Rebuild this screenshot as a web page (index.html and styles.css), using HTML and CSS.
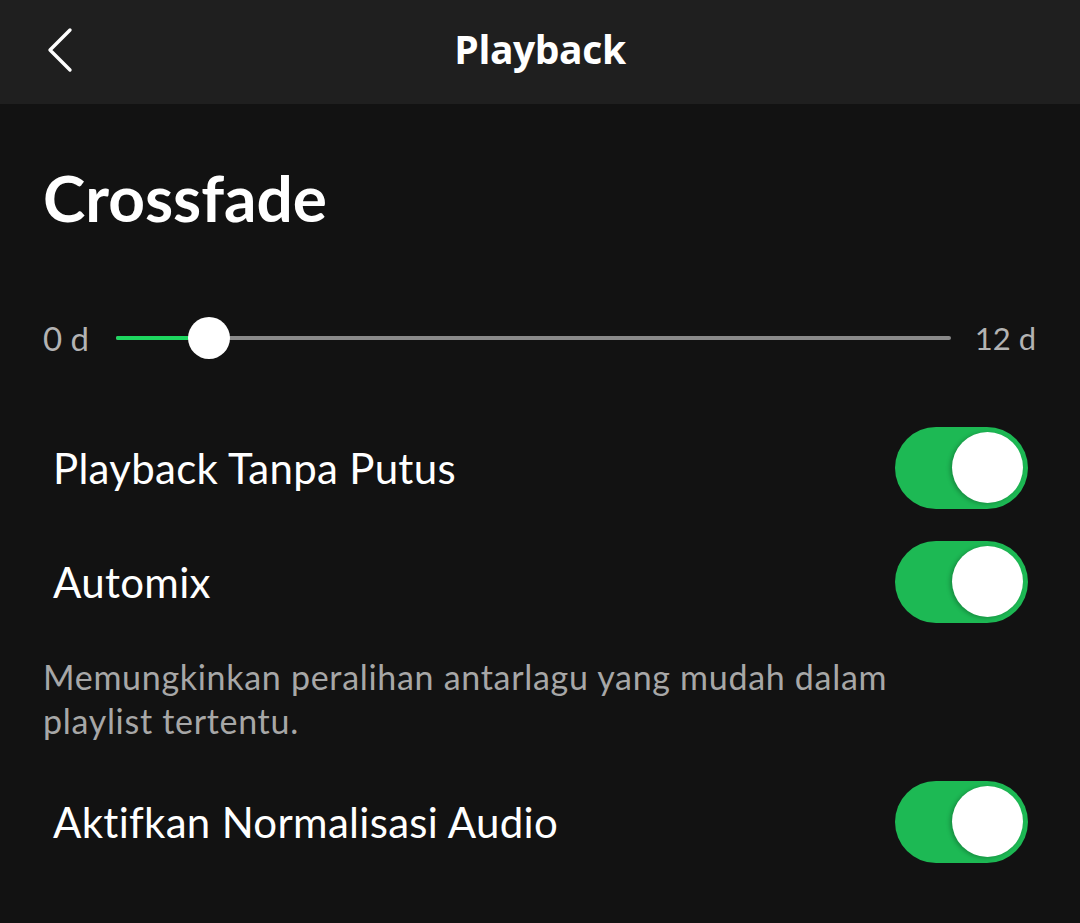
FILE: index.html
```html
<!DOCTYPE html>
<html>
<head>
<meta charset="utf-8">
<link rel="stylesheet" href="styles.css">
</head>
<body>
<header class="topbar">
  <svg class="back" width="40" height="48" viewBox="0 0 40 48"><path d="M26 4 L6 24 L26 44" fill="none" stroke="#fff" stroke-width="3.4" stroke-linecap="round" stroke-linejoin="round"/></svg>
  <div class="title">Playback</div>
</header>
<main class="content">
  <h1 class="heading">Crossfade</h1>
  <div class="slider-row">
    <span class="slider-label">0 d</span>
    <div class="track">
      <div class="fill" style="width:93px"></div>
      <div class="knob" style="left:93px"></div>
    </div>
    <span class="slider-label end">12 d</span>
  </div>
  <div class="row">
    <span class="row-label">Playback Tanpa Putus</span>
    <div class="toggle"><div class="toggle-knob"></div></div>
  </div>
  <div class="row">
    <span class="row-label">Automix</span>
    <div class="toggle"><div class="toggle-knob"></div></div>
  </div>
  <p class="desc">Memungkinkan peralihan antarlagu yang mudah dalam playlist tertentu.</p>
  <div class="row">
    <span class="row-label">Aktifkan Normalisasi Audio</span>
    <div class="toggle"><div class="toggle-knob"></div></div>
  </div>
</main>
</body>
</html>
```
FILE: styles.css
```css
html, body {
  margin: 0;
  padding: 0;
  background: #121212;
  font-family: Lato, "Noto Sans", sans-serif;
  color: #fff;
}
.topbar {
  position: relative;
  height: 104px;
  background: #1f1f1f;
  display: flex;
  align-items: center;
  justify-content: center;
}
.back {
  position: absolute;
  left: 44px;
  top: 26px;
}
.title {
  font-family: "Open Sans", sans-serif;
  font-weight: 700;
  font-size: 39px;
  letter-spacing: -0.4px;
  margin-top: -8px;
}
.content {
  padding: 0 44px 0 43px;
}
.heading {
  margin: 0;
  padding-top: 58px;
  font-size: 64px;
  font-weight: 700;
  line-height: 72px;
}
.slider-row {
  display: flex;
  align-items: center;
  margin-top: 82px;
  height: 44px;
}
.slider-label {
  font-size: 33px;
  color: #b3b3b3;
}
.slider-label.end {
  font-size: 31px;
}
.track {
  position: relative;
  flex: 1;
  height: 4px;
  border-radius: 2px;
  background: #8a8a8a;
  margin: 0 24px 0 27px;
}
.fill {
  position: absolute;
  left: 0;
  top: 0;
  height: 4px;
  border-radius: 2px;
  background: #1ed760;
}
.knob {
  position: absolute;
  top: -19px;
  width: 42px;
  height: 42px;
  margin-left: -21px;
  border-radius: 50%;
  background: #fff;
}
.row {
  display: flex;
  align-items: center;
  justify-content: space-between;
  height: 82px;
  margin-left: 10px;
}
.slider-row + .row { margin-top: 67px; }
.row + .row { margin-top: 32px; }
.row-label {
  font-size: 42px;
  font-weight: 400;
  letter-spacing: 0.3px;
  color: #fff;
}
.toggle {
  position: relative;
  width: 133px;
  height: 82px;
  border-radius: 41px;
  background: #1db954;
  margin-right: 8px;
}
.toggle-knob {
  position: absolute;
  right: 5px;
  top: 5px;
  width: 71px;
  height: 71px;
  border-radius: 50%;
  background: #fff;
  box-shadow: -2px 1px 4px rgba(0,0,0,0.25);
}
.desc {
  margin: 32px 0 38px 0;
  width: 900px;
  font-size: 34px;
  letter-spacing: 0.7px;
  line-height: 44px;
  color: #a7a7a7;
}
```
